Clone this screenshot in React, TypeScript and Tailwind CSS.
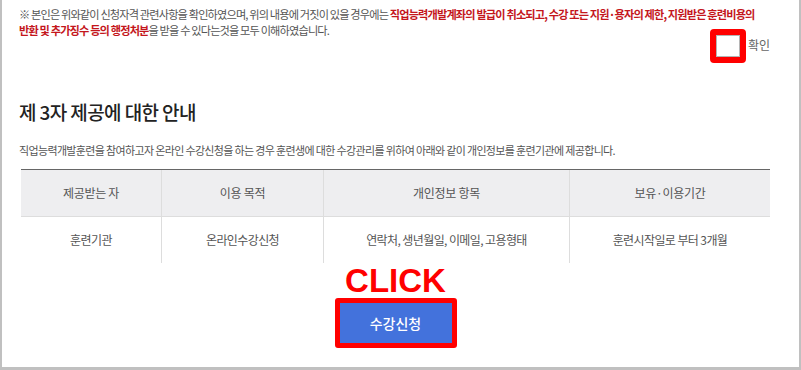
const cols = [
  { head: '제공받는 자', body: '훈련기관', w: 'w-[141px]' },
  { head: '이용 목적', body: '온라인수강신청', w: 'w-[162px]' },
  { head: '개인정보 항목', body: '연락처, 생년월일, 이메일, 고용형태', w: 'w-[246px]' },
  { head: '보유·이용기간', body: '훈련시작일로 부터 3개월', w: 'flex-1' },
]

export default function App() {
  return (
    <div
      className="w-[801px] h-[370px] bg-white border-l-2 border-r-2 border-b-[3px] border-[#c0c0c0] pl-[17px] pr-[29px] pt-[6px] text-[#555] overflow-hidden"
      style={{ fontFamily: '"Noto Sans CJK KR", "Noto Sans", sans-serif' }}
    >
      {/* 확인 문구 */}
      <p className="text-[11.2px] leading-[16px] tracking-[-0.85px] whitespace-nowrap">
        ※ 본인은 위와같이 신청자격 관련사항을 확인하였으며, 위의 내용에 거짓이 있을 경우에는{' '}
        <b className="text-[#c4161c] font-bold">
          직업능력개발계좌의 발급이 취소되고, 수강 또는 지원·용자의 제한, 지원받은 훈련비용의
          <br />
          반환 및 추가징수 등의 행정처분
        </b>
        을 받을 수 있다는것을 모두 이해하였습니다.
      </p>

      <div className="flex justify-end items-center mt-[-9px] gap-[2px]">
        <div className="w-[36px] h-[34px] rounded-[4px] border-[6px] border-[#ff0000] bg-white flex items-center justify-center">
          <div className="w-[24px] h-[22px] border border-[#b5b5b5] bg-white" />
        </div>
        <span className="text-[12px] text-[#666] mt-[-3px]">확인</span>
      </div>

      {/* 제 3자 제공 */}
      <h2 className="text-[19px] leading-[28px] font-medium text-[#222] mt-[35px] tracking-[-0.6px]">
        제 3자 제공에 대한 안내
      </h2>
      <p className="text-[11px] leading-[16px] mt-[16px] tracking-[-0.65px]">
        직업능력개발훈련을 참여하고자 온라인 수강신청을 하는 경우 훈련생에 대한 수강관리를 위하여 아래와 같이 개인정보를 훈련기관에 제공합니다.
      </p>

      <div className="mt-[11px] ml-[2px] border-t border-[#666]">
        <div className="flex bg-[#eeeef0] border-b border-[#ddd] h-[47px]">
          {cols.map((c, i) => (
            <div
              key={c.head}
              className={`${c.w} flex items-center justify-center text-[12px] tracking-[-0.3px] text-[#555] ${i < 3 ? 'border-r border-[#ddd]' : ''}`}
            >
              {c.head}
            </div>
          ))}
        </div>
        <div className="flex h-[46px]">
          {cols.map((c, i) => (
            <div
              key={c.head}
              className={`${c.w} flex items-center justify-center text-[12px] tracking-[-0.6px] text-[#555] ${i < 3 ? 'border-r border-[#ddd]' : ''}`}
            >
              {c.body}
            </div>
          ))}
        </div>
      </div>

      {/* 버튼 */}
      <div className="flex flex-col items-center ml-[2px] mt-[1px]">
        <div
          className="text-[#ff0000] text-[33px] leading-[34px] font-bold"
          style={{ fontFamily: '"Liberation Sans", Arial, sans-serif' }}
        >
          CLICK
        </div>
        <div className="rounded-[3px] border-[5px] border-[#ff0000]">
          <button className="w-[112px] h-[40px] bg-[#4372dc] text-white text-[14px] font-medium">
            수강신청
          </button>
        </div>
      </div>
    </div>
  )
}
